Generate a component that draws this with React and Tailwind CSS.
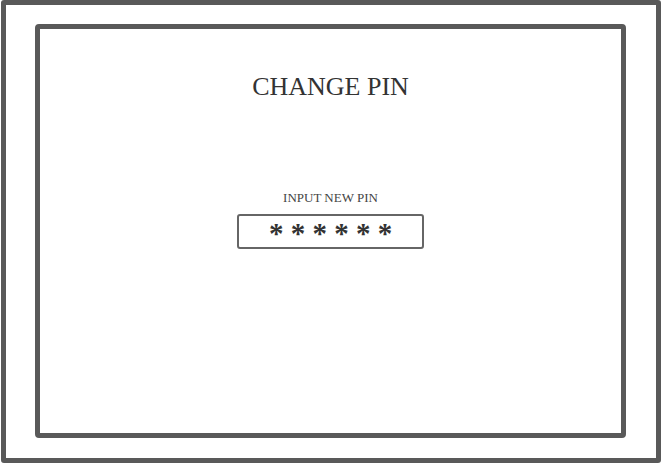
import React from "react";

const App = () => {
  return (
    <div className="w-[662px] h-[465px] bg-white overflow-hidden" style={{ fontFamily: '"Liberation Serif", serif' }}>
      {/* outer frame */}
      <div className="ml-px w-[660px] h-[463px] border-[5px] border-[#595959] rounded-[3px] px-[29px] pt-[19px]">
        {/* inner panel */}
        <div className="w-[591px] h-[414px] border-[5px] border-[#595959] rounded-[4px] flex flex-col items-center">
          <h1 className="mt-[45px] text-[26px] leading-none text-[#333] font-['Liberation_Serif',serif]">
            CHANGE PIN
          </h1>

          <p className="mt-[91px] text-[13px] leading-none text-[#444] font-['Liberation_Serif',serif]">
            INPUT NEW PIN
          </p>

          <div className="mt-[10px] w-[187px] h-[35px] border-2 border-[#666] rounded-[3px] flex items-center justify-center">
            <span className="text-[29px] font-bold leading-none text-[#333] pt-[3px] font-['Liberation_Serif',serif]">
              * * * * * *
            </span>
          </div>
        </div>
      </div>
    </div>
  );
};

export default App;
